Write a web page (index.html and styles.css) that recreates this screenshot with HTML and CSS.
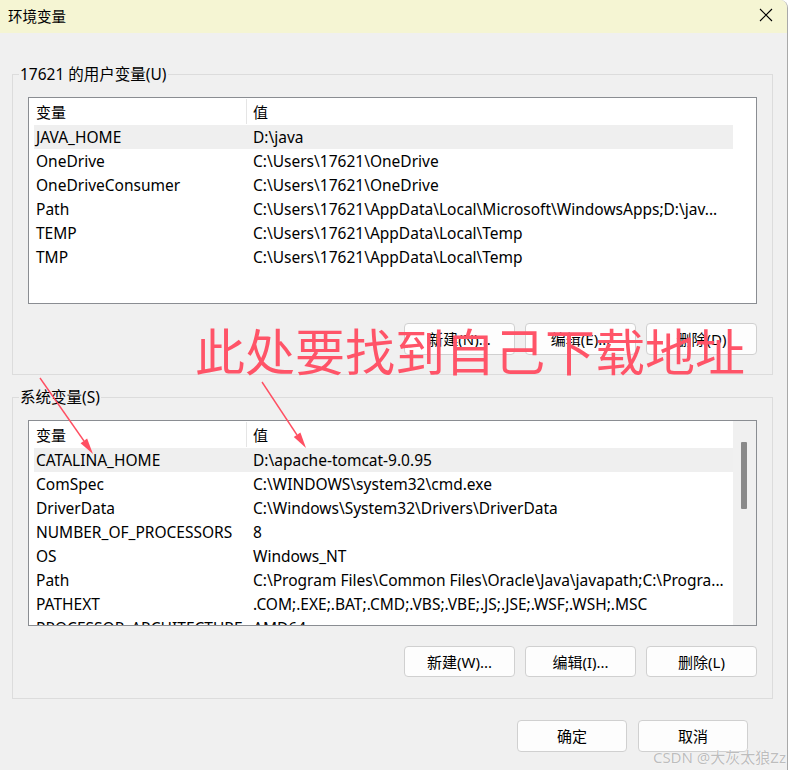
FILE: index.html
```html
<!DOCTYPE html>
<html lang="zh-CN">
<head>
<meta charset="utf-8">
<title>环境变量</title>
<link rel="stylesheet" href="styles.css">
</head>
<body>
<div class="window">
  <div class="titlebar">
    <span class="title">环境变量</span>
    <svg class="close" width="14" height="14" viewBox="0 0 14 14"><path d="M1 1 L13 13 M13 1 L1 13" stroke="#000" stroke-width="1.1" fill="none"/></svg>
  </div>
  <div class="content">
    <section class="group group-user">
      <div class="group-title">17621 的用户变量(U)</div>
      <div class="list list-user">
        <div class="list-main">
          <div class="list-head"><div class="hc">变量</div><div class="hdiv"></div><div class="hc hc2">值</div></div>
          <div class="row sel"><div class="cell">JAVA_HOME</div><div class="cell">D:\java</div></div>
          <div class="row"><div class="cell">OneDrive</div><div class="cell">C:\Users\17621\OneDrive</div></div>
          <div class="row"><div class="cell">OneDriveConsumer</div><div class="cell">C:\Users\17621\OneDrive</div></div>
          <div class="row"><div class="cell">Path</div><div class="cell">C:\Users\17621\AppData\Local\Microsoft\WindowsApps;D:\jav...</div></div>
          <div class="row"><div class="cell">TEMP</div><div class="cell">C:\Users\17621\AppData\Local\Temp</div></div>
          <div class="row"><div class="cell">TMP</div><div class="cell">C:\Users\17621\AppData\Local\Temp</div></div>
        </div>
        <div class="track track-empty"></div>
      </div>
      <div class="btns">
        <button class="btn">新建(N)...</button>
        <button class="btn">编辑(E)...</button>
        <button class="btn">删除(D)</button>
      </div>
    </section>

    <section class="group group-sys">
      <div class="group-title">系统变量(S)</div>
      <div class="list list-sys">
        <div class="list-main">
          <div class="list-head"><div class="hc">变量</div><div class="hdiv"></div><div class="hc hc2">值</div></div>
          <div class="row sel"><div class="cell">CATALINA_HOME</div><div class="cell">D:\apache-tomcat-9.0.95</div></div>
          <div class="row"><div class="cell">ComSpec</div><div class="cell">C:\WINDOWS\system32\cmd.exe</div></div>
          <div class="row"><div class="cell">DriverData</div><div class="cell">C:\Windows\System32\Drivers\DriverData</div></div>
          <div class="row"><div class="cell">NUMBER_OF_PROCESSORS</div><div class="cell">8</div></div>
          <div class="row"><div class="cell">OS</div><div class="cell">Windows_NT</div></div>
          <div class="row"><div class="cell">Path</div><div class="cell">C:\Program Files\Common Files\Oracle\Java\javapath;C:\Progra...</div></div>
          <div class="row"><div class="cell">PATHEXT</div><div class="cell">.COM;.EXE;.BAT;.CMD;.VBS;.VBE;.JS;.JSE;.WSF;.WSH;.MSC</div></div>
          <div class="row"><div class="cell">PROCESSOR_ARCHITECTURE</div><div class="cell">AMD64</div></div>
        </div>
        <div class="track"><div class="thumb"></div></div>
      </div>
      <div class="btns">
        <button class="btn">新建(W)...</button>
        <button class="btn">编辑(I)...</button>
        <button class="btn">删除(L)</button>
      </div>
    </section>

    <div class="footer">
      <button class="btn btn-footer">确定</button>
      <button class="btn btn-footer">取消</button>
    </div>
  </div>
</div>

<div class="annot">此处要找到自己下载地址</div>
<svg class="arrows" width="790" height="770" viewBox="0 0 790 770">
  <path d="M40 378 L84 441" stroke="#ff4f62" stroke-width="1.4" fill="none"/>
  <polygon points="93,454 80.6,443.2 87.1,438.6" fill="#ff4f62"/>
  <path d="M262 382 L297 435" stroke="#ff4f62" stroke-width="1.4" fill="none"/>
  <polygon points="306,448 293.8,436.9 300.4,432.5" fill="#ff4f62"/>
</svg>
<div class="watermark">CSDN @大灰太狼Zz</div>
</body>
</html>
```

FILE: styles.css
```css
* { box-sizing: border-box; }

html, body {
  margin: 0;
  padding: 0;
}

body {
  width: 790px;
  height: 770px;
  overflow: hidden;
  background: #ffffff;
  position: relative;
  font-family: "Noto Sans", "Noto Sans CJK SC", sans-serif;
  font-size: 15.5px;
  color: #000;
}

.window {
  width: 788px;
  height: 770px;
  background: #f0f0f0;
  border-right: 1px solid #a9a9a9;
  border-top-right-radius: 8px;
  overflow: hidden;
}

.titlebar {
  height: 33px;
  background: #f5f5d3;
  display: flex;
  align-items: center;
  justify-content: space-between;
  padding: 0 14px 0 8px;
}

.title {
  font-family: "Noto Sans CJK SC", sans-serif;
  font-size: 14.5px;
  line-height: 20px;
  margin-top: -2px;
}

.close {
  display: block;
  margin-top: -3px;
}

.content {
  padding: 41px 14px 0 12px;
}

.group {
  width: 761px;
  border: 1px solid #dcdcdc;
  padding: 0 15px 19px 15px;
}

.group-sys {
  margin-top: 22px;
  padding-bottom: 21px;
}

.group-title {
  width: fit-content;
  margin: -11px 0 0 -9px;
  padding: 0 1px;
  line-height: 20px;
  height: 20px;
  background: #f0f0f0;
  font-family: "Noto Sans", "Noto Sans CJK SC", sans-serif;
  font-size: 15.5px;
}

.list {
  margin-top: 13px;
  height: 207px;
  background: #fff;
  border: 1px solid #8a8d92;
  display: flex;
  overflow: hidden;
}

.list-sys {
  height: 206px;
}

.list-main {
  flex: 1;
  min-width: 0;
  overflow: hidden;
}

.list-head {
  height: 27px;
  display: grid;
  grid-template-columns: 212px 1px 1fr;
  margin-left: 5px;
  align-items: center;
}

.hc {
  padding-left: 2px;
  font-family: "Noto Sans CJK SC", sans-serif;
  font-size: 15px;
  line-height: 20px;
}

.hc2 {
  padding-left: 6px;
}

.hdiv {
  height: 25px;
  background: #e5e5e5;
}

.row {
  height: 24px;
  display: grid;
  grid-template-columns: 217px 1fr;
  margin-left: 5px;
  align-items: center;
  white-space: nowrap;
}

.row.sel {
  background: #efefef;
}

.cell {
  padding-left: 2px;
  overflow: hidden;
  line-height: 20px;
}

.track {
  width: 23px;
  flex: none;
  background: #f0f0f0;
  position: relative;
}

.track-empty {
  background: #fff;
}

.thumb {
  width: 6px;
  height: 67px;
  margin: 21px 0 0 8px;
  background: #8a8a8a;
  border-radius: 1px;
}

.btns {
  margin-top: 19px;
  display: flex;
  justify-content: flex-end;
  gap: 10px;
  padding-right: 0;
}

.group-sys .btns {
  margin-top: 20px;
}

.btn {
  width: 111px;
  height: 32px;
  background: #fdfdfd;
  border: 1px solid #d0d0d0;
  border-radius: 4px;
  font-family: "Noto Sans", "Noto Sans CJK SC", sans-serif;
  font-size: 15px;
  color: #000;
  padding: 0;
  line-height: 20px;
}

.group-sys .btn {
  height: 31px;
}

.footer {
  margin-top: 21px;
  width: 761px;
  display: flex;
  justify-content: flex-end;
  gap: 11px;
  padding-right: 25px;
}

.btn-footer {
  width: 110px;
  height: 32px;
}

.annot {
  position: absolute;
  left: 195px;
  top: 322px;
  font-family: "Noto Sans CJK SC", sans-serif;
  font-size: 50px;
  line-height: 54px;
  color: #ff5468;
  white-space: nowrap;
  letter-spacing: 0;
}

.arrows {
  position: absolute;
  left: 0;
  top: 0;
  pointer-events: none;
}

.watermark {
  position: absolute;
  right: 4px;
  bottom: 5px;
  font-family: "Noto Sans", "Noto Sans CJK SC", sans-serif;
  font-size: 15px;
  line-height: 16px;
  color: #bdbdbd;
  text-shadow: 0 0 1px #fff, 0 0 1px #fff;
  white-space: nowrap;
}
```
